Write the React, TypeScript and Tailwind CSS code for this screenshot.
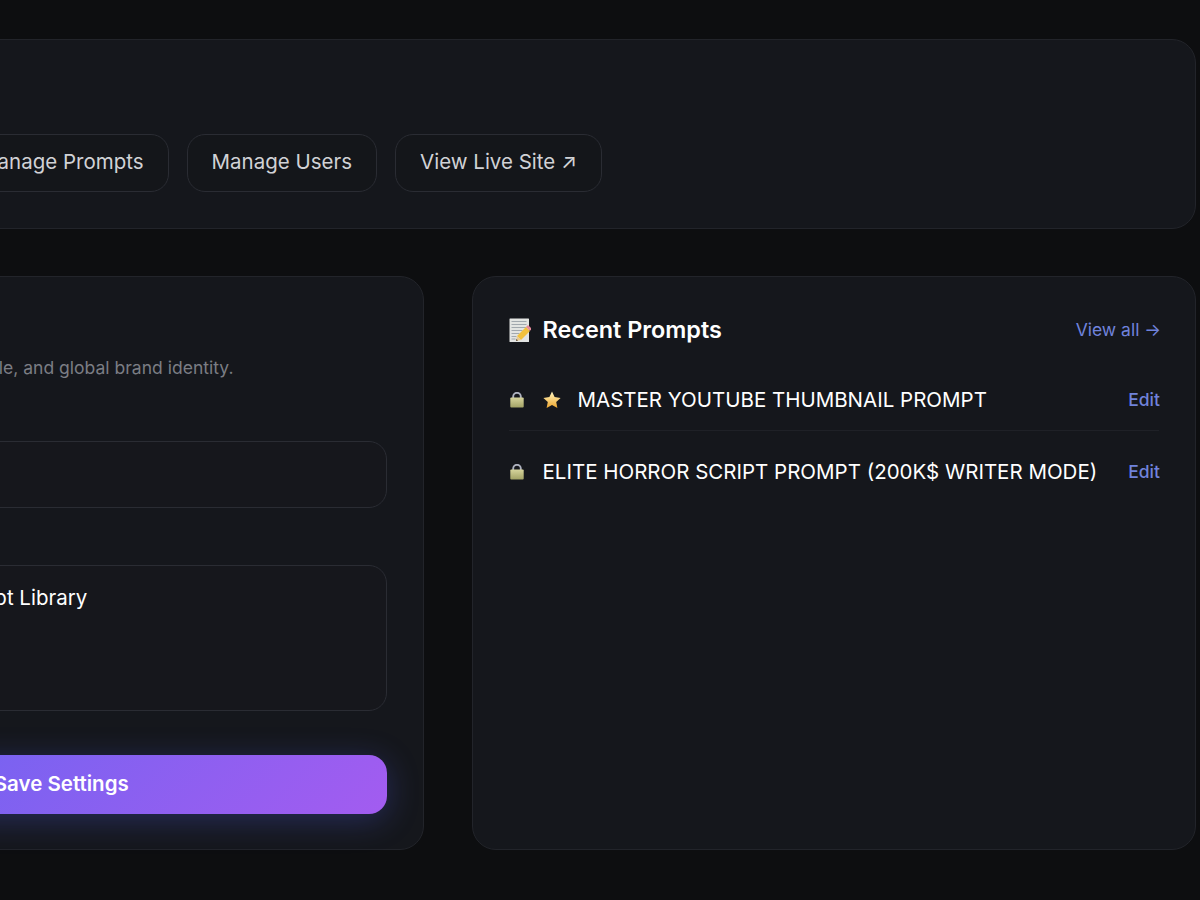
const navButtons = ['Edit Homepage', 'Manage Prompts', 'Manage Users', 'View Live Site ↗'];

const recentPrompts = [
  { id: 1, title: 'MASTER YOUTUBE THUMBNAIL PROMPT', featured: true },
  { id: 2, title: 'ELITE HORROR SCRIPT PROMPT (200K$ WRITER MODE)', featured: false },
];

function LockEmoji() {
  return (
    <svg width="16" height="16" viewBox="0 0 16 16" className="flex-shrink-0">
      <defs>
        <linearGradient id="lockBody" x1="0" y1="0" x2="0" y2="1">
          <stop offset="0" stopColor="#d6d49c" />
          <stop offset="1" stopColor="#a3a366" />
        </linearGradient>
      </defs>
      <path d="M4.2 6V4.6a3.8 3.8 0 0 1 7.6 0V6" fill="none" stroke="#aeb2bf" strokeWidth="1.9" />
      <rect x="1.3" y="5.6" width="13.4" height="9.8" rx="1" fill="url(#lockBody)" />
    </svg>
  );
}

function StarEmoji() {
  return (
    <svg width="18" height="18" viewBox="0 0 18 18" className="-mr-px flex-shrink-0">
      <defs>
        <linearGradient id="starFill" x1="0" y1="0" x2="0" y2="1">
          <stop offset="0" stopColor="#fff6c0" />
          <stop offset="1" stopColor="#eda62f" />
        </linearGradient>
      </defs>
      <path d="M9 .6l2.6 5.5 6 .8-4.4 4.1 1.2 5.9L9 14l-5.4 2.9 1.2-5.9L.4 6.9l6-.8z" fill="url(#starFill)" />
    </svg>
  );
}

function MemoEmoji() {
  return (
    <svg width="22" height="24" viewBox="0 0 22 24" className="flex-shrink-0">
      <rect x="0.5" y="0.5" width="19.5" height="23.5" rx="0.5" fill="#e2e4e2" />
      <path d="M2.5 3.5h15M2.5 6.5h15M2.5 9.5h15M2.5 12.5h11M2.5 15.5h8M2.5 18.5h5M2.5 21h4" stroke="#9aa0a8" strokeWidth="0.9" />
      <path d="M8 18l9-9 4 4-9 9z" fill="#f2c13c" />
      <path d="M17 9l2-2 3.4 3.4-1.4 2.6z" fill="#e58a9a" />
      <path d="M8 18l-1 5 5-1z" fill="#e9cb94" />
      <path d="M7.4 21l-.4 2 2-.4z" fill="#4a3f35" />
    </svg>
  );
}

export default function App() {
  return (
    <div className="min-h-[900px] w-[1200px] overflow-hidden bg-[#0d0e10] font-['Inter',sans-serif]">
      <div className="ml-[-301px] flex w-[1497px] flex-col gap-[47px] pt-[39px]">
        {/* Header */}
        <div className="flex h-[190px] items-end rounded-[24px] border border-[#22242a] bg-[#15171c] px-[36px] pb-[36px]">
          <div className="flex gap-[18px]">
            {navButtons.map((label, i) => (
              <button
                key={label}
                className={`flex h-[58px] items-center justify-center rounded-[18px] border border-[#2a2c33] bg-[#14161a] pb-[2px] text-[20.5px] text-[#d1d2d6] ${i === 0 ? 'w-[200px]' : 'px-[24px]'}`}
              >
                {label}
              </button>
            ))}
          </div>
        </div>

        {/* Main */}
        <div className="grid grid-cols-2 gap-[48px]">
          <div className="flex h-[574px] flex-col rounded-[24px] border border-[#22242a] bg-[#15171c] px-[36px] pt-[37px]">
            <h2 className="text-[23.4px] font-semibold leading-[32px] text-white">Site Settings</h2>
            <p className="mt-[8px] text-[17.55px] leading-[28px] text-[#7b7d84]">
              Control your website title, subtitle, and global brand identity.
            </p>
            <div className="mt-[27px] text-[16px] leading-[24px] text-[#d1d2d6]">Site Title</div>
            <div className="mt-[8px] h-[67px] rounded-[18px] border border-[#2a2c33] bg-[#16171c]" />
            <div className="mt-[25px] text-[16px] leading-[24px] text-[#d1d2d6]">Site Description</div>
            <div className="mt-[8px] h-[146px] rounded-[18px] border border-[#2a2c33] bg-[#16171c] px-[16px] py-[18px] text-[20.5px] leading-[28px] text-white">
              The Ultimate Video Prompt Library
            </div>
            <button className="mt-[44px] h-[59px] rounded-[18px] bg-[linear-gradient(135deg,#6366f1,#a35cf0)] text-[20.5px] font-semibold text-white shadow-[0_6px_32px_rgba(79,90,225,0.32)]">
              Save Settings
            </button>
          </div>

          <div className="flex h-[574px] flex-col rounded-[24px] border border-[#22242a] bg-[#15171c] px-[36px] pt-[37px]">
            <div className="flex items-center justify-between">
              <div className="flex items-center gap-[12px]">
                <MemoEmoji />
                <h2 className="text-[23.4px] font-semibold leading-[32px] text-white">Recent Prompts</h2>
              </div>
              <a className="-mr-[2px] text-[17.5px] text-[#7083dc]">View all →</a>
            </div>
            <div className="mt-[24px] flex flex-col">
              {recentPrompts.map((prompt, i) => (
                <div
                  key={prompt.id}
                  className={`flex items-center justify-between ${i === 0 ? 'h-[61px] border-b border-[#1f2127]' : 'h-[82px]'}`}
                >
                  <div className="flex items-center gap-[18px] text-[20.5px] text-white">
                    <LockEmoji />
                    {prompt.featured && <StarEmoji />}
                    <span>{prompt.title}</span>
                  </div>
                  <a className="-mr-[1px] text-[17.5px] font-medium text-[#7083dc]">Edit</a>
                </div>
              ))}
            </div>
          </div>
        </div>
      </div>
    </div>
  );
}
